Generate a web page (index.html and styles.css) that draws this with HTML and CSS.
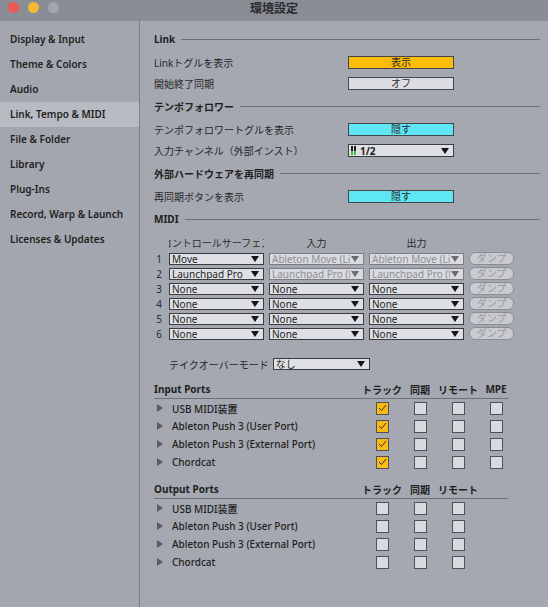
FILE: index.html
```html
<!DOCTYPE html>
<html lang="ja">
  <head>
    <meta charset="UTF-8">
    <meta name="viewport" content="width=device-width, initial-scale=1.0">
    <title>環境設定</title>
    <link rel="stylesheet" href="styles.css">
  </head>
  <body>
    <div class="window">
      <!-- window chrome -->
      <div class="titlebar">
        <div class="lights">
          <span class="light red"></span>
          <span class="light amber"></span>
          <span class="light off"></span>
        </div>
        <div class="title">環境設定</div>
      </div>

      <div class="main">
        <nav class="sidebar">
          <div class="tab">Display &amp; Input</div>
          <div class="tab">Theme &amp; Colors</div>
          <div class="tab">Audio</div>
          <div class="tab current">Link, Tempo &amp; MIDI</div>
          <div class="tab">File &amp; Folder</div>
          <div class="tab">Library</div>
          <div class="tab">Plug-Ins</div>
          <div class="tab">Record, Warp &amp; Launch</div>
          <div class="tab">Licenses &amp; Updates</div>
        </nav>

        <div class="prefs">
          <!-- Link -->
          <div class="sec-head"><span>Link</span><i class="rule"></i></div>
          <div class="row">
            <span class="label">Linkトグルを表示</span>
            <span class="toggle yellow">表示</span>
          </div>
          <div class="row">
            <span class="label">開始終了同期</span>
            <span class="toggle">オフ</span>
          </div>

          <!-- tempo follower -->
          <div class="sec-head"><span>テンポフォロワー</span><i class="rule"></i></div>
          <div class="row">
            <span class="label">テンポフォロワートグルを表示</span>
            <span class="toggle cyan">隠す</span>
          </div>
          <div class="row">
            <span class="label">入力チャンネル（外部インスト）</span>
            <span class="select wide">
              <span class="meter"><i></i><i></i></span>
              <span class="val strong">1/2</span>
              <svg class="arrow" width="8" height="6" viewBox="0 0 8 6"><polygon points="0,0 8,0 4,6"/></svg>
            </span>
          </div>

          <!-- external sync -->
          <div class="sec-head"><span>外部ハードウェアを再同期</span><i class="rule"></i></div>
          <div class="row">
            <span class="label">再同期ボタンを表示</span>
            <span class="toggle cyan">隠す</span>
          </div>

          <!-- MIDI -->
          <div class="sec-head"><span>MIDI</span><i class="rule"></i></div>

          <div class="midi">
            <span></span>
            <span class="col-head clip"><span>コントロールサーフェス</span></span>
            <span class="col-head">入力</span>
            <span class="col-head">出力</span>
            <span></span>

            <span class="num">1</span>
            <span class="select"><span class="val">Move</span><svg class="arrow" width="8" height="6" viewBox="0 0 8 6"><polygon points="0,0 8,0 4,6"/></svg></span>
            <span class="select dim"><span class="val">Ableton Move (Live</span><svg class="arrow" width="8" height="6" viewBox="0 0 8 6"><polygon points="0,0 8,0 4,6"/></svg></span>
            <span class="select dim"><span class="val">Ableton Move (Live</span><svg class="arrow" width="8" height="6" viewBox="0 0 8 6"><polygon points="0,0 8,0 4,6"/></svg></span>
            <span class="dump">ダンプ</span>

            <span class="num">2</span>
            <span class="select"><span class="val">Launchpad Pro</span><svg class="arrow" width="8" height="6" viewBox="0 0 8 6"><polygon points="0,0 8,0 4,6"/></svg></span>
            <span class="select dim"><span class="val">Launchpad Pro (Live</span><svg class="arrow" width="8" height="6" viewBox="0 0 8 6"><polygon points="0,0 8,0 4,6"/></svg></span>
            <span class="select dim"><span class="val">Launchpad Pro (Live</span><svg class="arrow" width="8" height="6" viewBox="0 0 8 6"><polygon points="0,0 8,0 4,6"/></svg></span>
            <span class="dump">ダンプ</span>

            <span class="num">3</span>
            <span class="select"><span class="val">None</span><svg class="arrow" width="8" height="6" viewBox="0 0 8 6"><polygon points="0,0 8,0 4,6"/></svg></span>
            <span class="select"><span class="val">None</span><svg class="arrow" width="8" height="6" viewBox="0 0 8 6"><polygon points="0,0 8,0 4,6"/></svg></span>
            <span class="select"><span class="val">None</span><svg class="arrow" width="8" height="6" viewBox="0 0 8 6"><polygon points="0,0 8,0 4,6"/></svg></span>
            <span class="dump">ダンプ</span>

            <span class="num">4</span>
            <span class="select"><span class="val">None</span><svg class="arrow" width="8" height="6" viewBox="0 0 8 6"><polygon points="0,0 8,0 4,6"/></svg></span>
            <span class="select"><span class="val">None</span><svg class="arrow" width="8" height="6" viewBox="0 0 8 6"><polygon points="0,0 8,0 4,6"/></svg></span>
            <span class="select"><span class="val">None</span><svg class="arrow" width="8" height="6" viewBox="0 0 8 6"><polygon points="0,0 8,0 4,6"/></svg></span>
            <span class="dump">ダンプ</span>

            <span class="num">5</span>
            <span class="select"><span class="val">None</span><svg class="arrow" width="8" height="6" viewBox="0 0 8 6"><polygon points="0,0 8,0 4,6"/></svg></span>
            <span class="select"><span class="val">None</span><svg class="arrow" width="8" height="6" viewBox="0 0 8 6"><polygon points="0,0 8,0 4,6"/></svg></span>
            <span class="select"><span class="val">None</span><svg class="arrow" width="8" height="6" viewBox="0 0 8 6"><polygon points="0,0 8,0 4,6"/></svg></span>
            <span class="dump">ダンプ</span>

            <span class="num">6</span>
            <span class="select"><span class="val">None</span><svg class="arrow" width="8" height="6" viewBox="0 0 8 6"><polygon points="0,0 8,0 4,6"/></svg></span>
            <span class="select"><span class="val">None</span><svg class="arrow" width="8" height="6" viewBox="0 0 8 6"><polygon points="0,0 8,0 4,6"/></svg></span>
            <span class="select"><span class="val">None</span><svg class="arrow" width="8" height="6" viewBox="0 0 8 6"><polygon points="0,0 8,0 4,6"/></svg></span>
            <span class="dump">ダンプ</span>
          </div>

          <div class="takeover">
            <span class="label">テイクオーバーモード</span>
            <span class="select takeover-sel"><span class="val">なし</span><svg class="arrow" width="8" height="6" viewBox="0 0 8 6"><polygon points="0,0 8,0 4,6"/></svg></span>
          </div>

          <!-- MIDI ports -->
          <div class="ports">
            <div class="port-head">
              <span>Input Ports</span>
              <span class="c">トラック</span>
              <span class="c">同期</span>
              <span class="c">リモート</span>
              <span class="c">MPE</span>
            </div>
            <div class="port">
              <span class="name"><svg class="tri" width="6" height="8" viewBox="0 0 6 8"><polygon points="0,0 6,4 0,8"/></svg>USB MIDI装置</span>
              <span class="c"><i class="box on"><svg width="9" height="8" viewBox="0 0 9 8"><polyline points="1,4 3.5,6.5 8,1"/></svg></i></span>
              <span class="c"><i class="box"></i></span>
              <span class="c"><i class="box"></i></span>
              <span class="c"><i class="box"></i></span>
            </div>
            <div class="port">
              <span class="name"><svg class="tri" width="6" height="8" viewBox="0 0 6 8"><polygon points="0,0 6,4 0,8"/></svg>Ableton Push 3 (User Port)</span>
              <span class="c"><i class="box on"><svg width="9" height="8" viewBox="0 0 9 8"><polyline points="1,4 3.5,6.5 8,1"/></svg></i></span>
              <span class="c"><i class="box"></i></span>
              <span class="c"><i class="box"></i></span>
              <span class="c"><i class="box"></i></span>
            </div>
            <div class="port">
              <span class="name"><svg class="tri" width="6" height="8" viewBox="0 0 6 8"><polygon points="0,0 6,4 0,8"/></svg>Ableton Push 3 (External Port)</span>
              <span class="c"><i class="box on"><svg width="9" height="8" viewBox="0 0 9 8"><polyline points="1,4 3.5,6.5 8,1"/></svg></i></span>
              <span class="c"><i class="box"></i></span>
              <span class="c"><i class="box"></i></span>
              <span class="c"><i class="box"></i></span>
            </div>
            <div class="port">
              <span class="name"><svg class="tri" width="6" height="8" viewBox="0 0 6 8"><polygon points="0,0 6,4 0,8"/></svg>Chordcat</span>
              <span class="c"><i class="box on"><svg width="9" height="8" viewBox="0 0 9 8"><polyline points="1,4 3.5,6.5 8,1"/></svg></i></span>
              <span class="c"><i class="box"></i></span>
              <span class="c"><i class="box"></i></span>
              <span class="c"><i class="box"></i></span>
            </div>
          </div>

          <div class="ports out">
            <div class="port-head">
              <span>Output Ports</span>
              <span class="c">トラック</span>
              <span class="c">同期</span>
              <span class="c">リモート</span>
              <span></span>
            </div>
            <div class="port">
              <span class="name"><svg class="tri" width="6" height="8" viewBox="0 0 6 8"><polygon points="0,0 6,4 0,8"/></svg>USB MIDI装置</span>
              <span class="c"><i class="box"></i></span>
              <span class="c"><i class="box"></i></span>
              <span class="c"><i class="box"></i></span>
              <span></span>
            </div>
            <div class="port">
              <span class="name"><svg class="tri" width="6" height="8" viewBox="0 0 6 8"><polygon points="0,0 6,4 0,8"/></svg>Ableton Push 3 (User Port)</span>
              <span class="c"><i class="box"></i></span>
              <span class="c"><i class="box"></i></span>
              <span class="c"><i class="box"></i></span>
              <span></span>
            </div>
            <div class="port">
              <span class="name"><svg class="tri" width="6" height="8" viewBox="0 0 6 8"><polygon points="0,0 6,4 0,8"/></svg>Ableton Push 3 (External Port)</span>
              <span class="c"><i class="box"></i></span>
              <span class="c"><i class="box"></i></span>
              <span class="c"><i class="box"></i></span>
              <span></span>
            </div>
            <div class="port">
              <span class="name"><svg class="tri" width="6" height="8" viewBox="0 0 6 8"><polygon points="0,0 6,4 0,8"/></svg>Chordcat</span>
              <span class="c"><i class="box"></i></span>
              <span class="c"><i class="box"></i></span>
              <span class="c"><i class="box"></i></span>
              <span></span>
            </div>
          </div>
        </div>
      </div>
    </div>
  </body>
</html>
```

FILE: styles.css
```css
/* Preferences window, Link / Tempo / MIDI tab */
body {
  margin: 0;
  font-family: "Noto Sans", "Noto Sans CJK JP", sans-serif;
  font-size: 10px;
  color: #1e1f22;
}

.window {
  width: 548px;
  height: 607px;
  display: flex;
  flex-direction: column;
  background-color: #a5a8b0;
  overflow: hidden;
}

/* title bar */
.titlebar {
  position: relative;
  height: 21px;
  flex: none;
  display: flex;
  align-items: center;
  justify-content: center;
  background-color: #8a8d95;
}
.lights {
  position: absolute;
  left: 8px;
  top: 2px;
  display: flex;
  gap: 9px;
}
.light {
  width: 11px;
  height: 11px;
  border-radius: 50%;
}
.light.red { background-color: #ec5a54; }
.light.amber { background-color: #f3bb30; }
.light.off { background-color: #a3a5aa; }
.title {
  font-size: 12px;
  font-weight: 700;
  color: #2a2b2e;
  margin-top: -5px;
}

.main {
  flex: 1;
  display: flex;
}

/* left tab list */
.sidebar {
  width: 139px;
  flex: none;
  padding-top: 6px;
  background-color: #a3a6ae;
  border-right: 1px solid #7c8088;
}
.tab {
  height: 25px;
  line-height: 25px;
  padding-left: 10px;
  font-weight: 600;
  font-size: 10px;
}
.tab.current {
  background-color: #b8bbc2;
}

/* right panel */
.prefs {
  flex: 1;
  padding: 7px 8px 0 14px;
}
.sec-head {
  display: flex;
  align-items: center;
  gap: 6px;
  height: 22px;
  margin-top: 1px;
  margin-bottom: 2px;
  font-weight: 700;
}
.sec-head:first-child { margin-top: 0; }
.rule {
  flex: 1;
  height: 1px;
  background-color: #6c7078;
}
.row {
  display: grid;
  grid-template-columns: 194px 106px;
  align-items: center;
  height: 21px;
}
.label { color: #26272a; }

.toggle {
  height: 13px;
  box-sizing: border-box;
  border: 1px solid #45464a;
  background-color: #dcdde2;
  text-align: center;
  line-height: 11px;
  color: #2a2a2c;
}
.toggle.yellow { background-color: #fbbd0a; }
.toggle.cyan { background-color: #5fe6f5; }

/* drop-down boxes */
.select {
  display: flex;
  align-items: center;
  height: 12px;
  box-sizing: border-box;
  border: 1px solid #3b3c40;
  background-color: #dfe0e5;
  padding: 0 4px 0 2px;
  overflow: hidden;
  white-space: nowrap;
}
.select.wide { height: 13px; }
.select .val {
  flex: 1;
  overflow: hidden;
  line-height: 10px;
}
.select .strong { font-weight: 700; }
.select .arrow {
  flex: none;
  fill: #151515;
  margin-left: 1px;
}
.select.dim {
  border-color: #7b7d83;
  color: #8d8f95;
  background-color: #d9dbe0;
}
.select.dim .arrow { fill: #6a6c72; }
.meter {
  display: flex;
  gap: 1px;
  margin-right: 4px;
}
.meter i {
  width: 2px;
  height: 9px;
  background: linear-gradient(#1b1b1b 55%, #3fbf3a 55%);
}

/* control surface table */
.midi {
  display: grid;
  grid-template-columns: 10px 95px 95px 95px 45px;
  grid-template-rows: 18px;
  grid-auto-rows: 15px;
  column-gap: 5px;
  align-items: center;
  margin-top: 3px;
}
.col-head {
  text-align: center;
  color: #2c2d30;
  white-space: nowrap;
}
.col-head.clip {
  display: flex;
  justify-content: center;
  overflow: hidden;
}
.num {
  text-align: center;
  color: #2a2b2e;
}
.dump {
  height: 11px;
  line-height: 10px;
  border: 1px solid #8b8d93;
  border-radius: 6px;
  background-color: #c9cbd1;
  color: #9a9ca2;
  text-align: center;
}

.takeover {
  display: flex;
  align-items: center;
  gap: 4px;
  height: 14px;
  margin-top: 16px;
  padding-left: 15px;
}
.takeover-sel { width: 97px; }

/* port lists */
.ports {
  margin-top: 9px;
  width: 354px;
}
.port-head,
.port {
  display: grid;
  grid-template-columns: 209px 38px 38px 38px 38px;
  align-items: center;
  height: 18px;
}
.port-head {
  font-weight: 700;
  border-bottom: 1px solid #6c7078;
  white-space: nowrap;
}
.c {
  display: flex;
  justify-content: center;
  white-space: nowrap;
}
.name {
  display: flex;
  align-items: center;
  font-weight: 500;
}
.tri {
  fill: #5a5c61;
  margin: 0 9px 0 3px;
}
.box {
  width: 13px;
  height: 13px;
  box-sizing: border-box;
  border: 1px solid #505156;
  background-color: #d8dadf;
  display: flex;
  align-items: center;
  justify-content: center;
}
.box.on { background-color: #f8bb16; }
.box svg {
  fill: none;
  stroke: #3a3020;
  stroke-width: 1;
}
```
